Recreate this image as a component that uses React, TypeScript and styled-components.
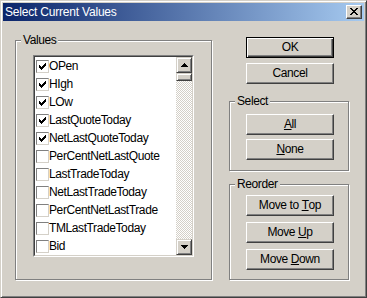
import * as React from "react";
import styled, { createGlobalStyle } from "styled-components";

const GlobalStyle = createGlobalStyle`
  html, body {
    margin: 0;
    padding: 0;
    background: #d4d0c8;
  }
  body {
    font-family: "Liberation Sans", Arial, sans-serif;
    font-size: 12px;
    letter-spacing: -0.4px;
    color: #000;
  }
`;

const StyledWindow = styled.div`
  width: 367px;
  height: 298px;
  box-sizing: border-box;
  background: #d4d0c8;
  border: 1px solid;
  border-color: #d4d0c8 #404040 #404040 #d4d0c8;
  box-shadow: inset 1px 1px #fff, inset -1px -1px #808080;
  padding: 2px;
  display: flex;
  flex-direction: column;
`;

const StyledTitleBar = styled.div`
  height: 18px;
  flex: none;
  display: flex;
  align-items: center;
  justify-content: space-between;
  padding: 0 2px;
  background: linear-gradient(to right, #0a246a, #a6caf0);
`;

const StyledTitle = styled.span`
  color: #fff;
  font-size: 12px;
  letter-spacing: -0.2px;
  line-height: 18px;
`;

const StyledCloseButton = styled.div`
  width: 16px;
  height: 14px;
  box-sizing: border-box;
  background: #d4d0c8;
  border: 1px solid;
  border-color: #fff #404040 #404040 #fff;
  box-shadow: inset -1px -1px #808080;
  display: flex;
  align-items: center;
  justify-content: center;
  padding: 0 1px 1px 0;
`;

const StyledBody = styled.div`
  flex: 1;
  display: flex;
  gap: 17px;
  padding: 16px 0 0 12px;
`;

const StyledGroupBox = styled.div<{ $w: number; $h: number }>`
  position: relative;
  width: ${(p) => p.$w}px;
  height: ${(p) => p.$h}px;
  box-sizing: border-box;
  border: 1px solid #808080;
  box-shadow: inset 1px 1px #fff, 1px 1px #fff;
  display: flex;
  flex-direction: column;
`;

const StyledLegend = styled.span`
  position: absolute;
  left: 5px;
  top: -8px;
  line-height: 14px;
  padding: 0 2px;
  background: #d4d0c8;
`;

const StyledValuesBox = styled(StyledGroupBox)`
  margin-top: 3px;
  padding: 14px 0 0 17px;
`;

const StyledListOuter = styled.div`
  width: 161px;
  height: 202px;
  box-sizing: border-box;
  border: 1px solid;
  border-color: #808080 #fff #fff #808080;
`;

const StyledListInner = styled.div`
  height: 100%;
  box-sizing: border-box;
  border: 1px solid;
  border-color: #404040 #d4d0c8 #d4d0c8 #404040;
  background: #fff;
  display: flex;
`;

const StyledItems = styled.div`
  flex: 1;
  overflow: hidden;
`;

const StyledRow = styled.div`
  height: 18px;
  display: flex;
  align-items: center;
  padding-left: 1px;
  white-space: nowrap;
`;

const StyledCheck = styled.span`
  width: 13px;
  height: 13px;
  box-sizing: border-box;
  flex: none;
  border: 1px solid;
  border-color: #808080 #d4d0c8 #d4d0c8 #808080;
  background: #fff;
  display: flex;
  align-items: center;
  justify-content: center;
`;

const StyledScrollbar = styled.div`
  width: 16px;
  flex: none;
  display: flex;
  flex-direction: column;
`;

const StyledRaised = styled.div<{ $h: number }>`
  height: ${(p) => p.$h}px;
  flex: none;
  box-sizing: border-box;
  background: #d4d0c8;
  border: 1px solid;
  border-color: #d4d0c8 #404040 #404040 #d4d0c8;
  box-shadow: inset 1px 1px #fff, inset -1px -1px #808080;
  display: flex;
  align-items: center;
  justify-content: center;
`;

const StyledTrack = styled.div`
  flex: 1;
  background: repeating-conic-gradient(#d4d0c8 0 25%, #fff 0 50%) 0 0 / 2px 2px;
`;

const StyledRightColumn = styled.div`
  width: 121px;
  display: flex;
  flex-direction: column;
`;

const StyledButton = styled.div<{ $default?: boolean; $gap?: number }>`
  width: 88px;
  height: 21px;
  box-sizing: border-box;
  flex: none;
  margin-top: ${(p) => p.$gap ?? 0}px;
  background: #d4d0c8;
  border: 1px solid;
  border-color: ${(p) => (p.$default ? "#000" : "#fff #404040 #404040 #fff")};
  box-shadow: ${(p) =>
    p.$default
      ? "inset 1px 1px #fff, inset -1px -1px #404040, inset -2px -2px #808080"
      : "inset -1px -1px #808080"};
  display: flex;
  align-items: center;
  justify-content: center;
  line-height: 14px;
  padding-bottom: 1px;
`;

const StyledTopButtons = styled.div`
  display: flex;
  flex-direction: column;
  padding-left: 17px;
`;

const StyledSelectBox = styled(StyledGroupBox)`
  margin-top: 17px;
  padding: 12px 0 10px 16px;
`;

const StyledReorderBox = styled(StyledGroupBox)`
  margin-top: 13px;
  padding: 10px 0 9px 16px;
`;

const items = [
  { name: "OPen", checked: true },
  { name: "HIgh", checked: true },
  { name: "LOw", checked: true },
  { name: "LastQuoteToday", checked: true },
  { name: "NetLastQuoteToday", checked: true },
  { name: "PerCentNetLastQuote", checked: false },
  { name: "LastTradeToday", checked: false },
  { name: "NetLastTradeToday", checked: false },
  { name: "PerCentNetLastTrade", checked: false },
  { name: "TMLastTradeToday", checked: false },
  { name: "Bid", checked: false },
];

const CheckMark = () => (
  <svg width="7" height="7" viewBox="0 0 7 7" shapeRendering="crispEdges">
    <path
      d="M6 0h1v3h-1v1h-1v1h-1v1h-1v1h-1v-1h-1v-1h-1v-3h1v1h1v1h1v-1h1v-1h1z"
      fill="#000"
    />
  </svg>
);

const Arrow = ({ up }: { up?: boolean }) => (
  <svg width="7" height="4" viewBox="0 0 7 4" shapeRendering="crispEdges">
    <polygon points={up ? "3.5,0 7,4 0,4" : "0,0 7,0 3.5,4"} fill="#000" />
  </svg>
);

const CloseGlyph = () => (
  <svg width="8" height="7" viewBox="0 0 8 7" shapeRendering="crispEdges">
    <path
      d="M0 0h2v1h1v1h2v-1h1v-1h2v1h-1v1h-1v1h-1v1h1v1h1v1h1v1h-2v-1h-1v-1h-2v1h-1v1h-2v-1h1v-1h1v-1h1v-1h-1v-1h-1v-1h-1z"
      fill="#000"
    />
  </svg>
);

export default function App() {
  return (
    <>
      <GlobalStyle />
      <StyledWindow>
        <StyledTitleBar>
          <StyledTitle>Select Current Values</StyledTitle>
          <StyledCloseButton>
            <CloseGlyph />
          </StyledCloseButton>
        </StyledTitleBar>
        <StyledBody>
          <StyledValuesBox $w={197} $h={240}>
            <StyledLegend>Values</StyledLegend>
            <StyledListOuter>
              <StyledListInner>
                <StyledItems>
                  {items.map((item) => (
                    <StyledRow key={item.name}>
                      <StyledCheck>{item.checked && <CheckMark />}</StyledCheck>
                      {item.name}
                    </StyledRow>
                  ))}
                </StyledItems>
                <StyledScrollbar>
                  <StyledRaised $h={16}>
                    <Arrow up />
                  </StyledRaised>
                  <StyledRaised $h={8} />
                  <StyledTrack />
                  <StyledRaised $h={16}>
                    <Arrow />
                  </StyledRaised>
                </StyledScrollbar>
              </StyledListInner>
            </StyledListOuter>
          </StyledValuesBox>
          <StyledRightColumn>
            <StyledTopButtons>
              <StyledButton $default>OK</StyledButton>
              <StyledButton $gap={5}>Cancel</StyledButton>
            </StyledTopButtons>
            <StyledSelectBox $w={120} $h={70}>
              <StyledLegend>Select</StyledLegend>
              <StyledButton>
                <u>A</u>ll
              </StyledButton>
              <StyledButton $gap={4}>
                <u>N</u>one
              </StyledButton>
            </StyledSelectBox>
            <StyledReorderBox $w={120} $h={96}>
              <StyledLegend>Reorder</StyledLegend>
              <StyledButton>
                Move to&nbsp;<u>T</u>op
              </StyledButton>
              <StyledButton $gap={6}>
                Move&nbsp;<u>U</u>p
              </StyledButton>
              <StyledButton $gap={6}>
                Move&nbsp;<u>D</u>own
              </StyledButton>
            </StyledReorderBox>
          </StyledRightColumn>
        </StyledBody>
      </StyledWindow>
    </>
  );
}
